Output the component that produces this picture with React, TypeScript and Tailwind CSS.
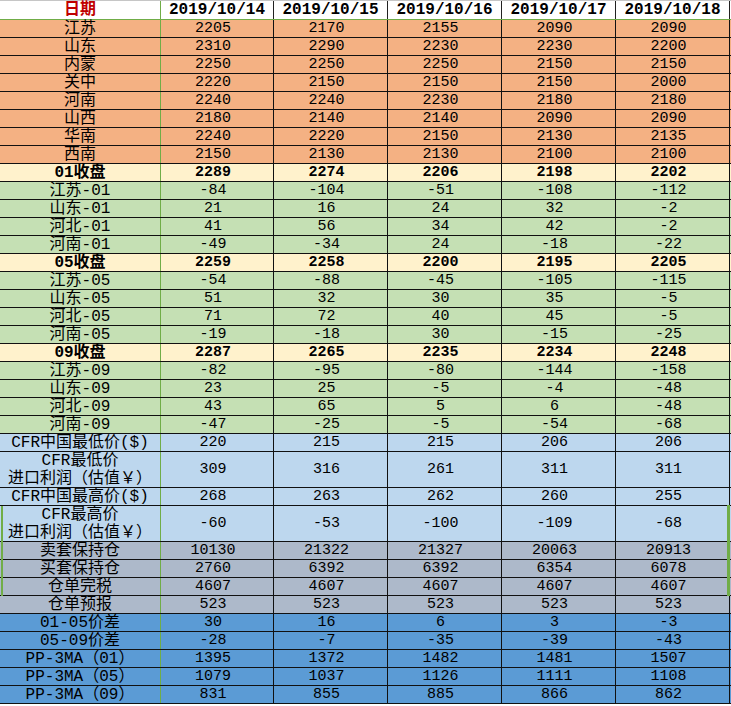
import React from "react";

type Row = {
  label: string | [string, string];
  vals: (number | string)[];
  bg: string;
  bold?: boolean;
  tall?: boolean;
};

const ORANGE = "bg-[#F4B183]";
const YELLOW = "bg-[#FFF2CC]";
const GREEN = "bg-[#C5E0B4]";
const LBLUE = "bg-[#BDD7EE]";
const GRAY = "bg-[#ADB9CA]";
const BLUE = "bg-[#5B9BD5]";

const rows: Row[] = [
  { label: "江苏", vals: [2205, 2170, 2155, 2090, 2090], bg: ORANGE },
  { label: "山东", vals: [2310, 2290, 2230, 2230, 2200], bg: ORANGE },
  { label: "内蒙", vals: [2250, 2250, 2250, 2150, 2150], bg: ORANGE },
  { label: "关中", vals: [2220, 2150, 2150, 2150, 2000], bg: ORANGE },
  { label: "河南", vals: [2240, 2240, 2230, 2180, 2180], bg: ORANGE },
  { label: "山西", vals: [2180, 2140, 2140, 2090, 2090], bg: ORANGE },
  { label: "华南", vals: [2240, 2220, 2150, 2130, 2135], bg: ORANGE },
  { label: "西南", vals: [2150, 2130, 2130, 2100, 2100], bg: ORANGE },
  { label: "01收盘", vals: [2289, 2274, 2206, 2198, 2202], bg: YELLOW, bold: true },
  { label: "江苏-01", vals: [-84, -104, -51, -108, -112], bg: GREEN },
  { label: "山东-01", vals: [21, 16, 24, 32, -2], bg: GREEN },
  { label: "河北-01", vals: [41, 56, 34, 42, -2], bg: GREEN },
  { label: "河南-01", vals: [-49, -34, 24, -18, -22], bg: GREEN },
  { label: "05收盘", vals: [2259, 2258, 2200, 2195, 2205], bg: YELLOW, bold: true },
  { label: "江苏-05", vals: [-54, -88, -45, -105, -115], bg: GREEN },
  { label: "山东-05", vals: [51, 32, 30, 35, -5], bg: GREEN },
  { label: "河北-05", vals: [71, 72, 40, 45, -5], bg: GREEN },
  { label: "河南-05", vals: [-19, -18, 30, -15, -25], bg: GREEN },
  { label: "09收盘", vals: [2287, 2265, 2235, 2234, 2248], bg: YELLOW, bold: true },
  { label: "江苏-09", vals: [-82, -95, -80, -144, -158], bg: GREEN },
  { label: "山东-09", vals: [23, 25, -5, -4, -48], bg: GREEN },
  { label: "河北-09", vals: [43, 65, 5, 6, -48], bg: GREEN },
  { label: "河南-09", vals: [-47, -25, -5, -54, -68], bg: GREEN },
  { label: "CFR中国最低价($)", vals: [220, 215, 215, 206, 206], bg: LBLUE },
  { label: ["CFR最低价", "进口利润（估值￥）"], vals: [309, 316, 261, 311, 311], bg: LBLUE, tall: true },
  { label: "CFR中国最高价($)", vals: [268, 263, 262, 260, 255], bg: LBLUE },
  { label: ["CFR最高价", "进口利润（估值￥）"], vals: [-60, -53, -100, -109, -68], bg: LBLUE, tall: true },
  { label: "卖套保持仓", vals: [10130, 21322, 21327, 20063, 20913], bg: GRAY },
  { label: "买套保持仓", vals: [2760, 6392, 6392, 6354, 6078], bg: GRAY },
  { label: "仓单完税", vals: [4607, 4607, 4607, 4607, 4607], bg: GRAY },
  { label: "仓单预报", vals: [523, 523, 523, 523, 523], bg: GRAY },
  { label: "01-05价差", vals: [30, 16, 6, 3, -3], bg: BLUE },
  { label: "05-09价差", vals: [-28, -7, -35, -39, -43], bg: BLUE },
  { label: "PP-3MA（01）", vals: [1395, 1372, 1482, 1481, 1507], bg: BLUE },
  { label: "PP-3MA（05）", vals: [1079, 1037, 1126, 1111, 1108], bg: BLUE },
  { label: "PP-3MA（09）", vals: [831, 855, 885, 866, 862], bg: BLUE },
];

const dates = ["2019/10/14", "2019/10/15", "2019/10/16", "2019/10/17", "2019/10/18"];
const widths = ["w-[113px]", "w-[114px]", "w-[114px]", "w-[114px]", "w-[114px]"];

const FONT = "font-['Liberation_Mono','Noto_Sans_CJK_SC',monospace]";

export default function App() {
  return (
    <div className={`relative w-[731px] h-[706px] bg-white text-black ${FONT}`}>
      {/* header */}
      <div className="flex h-[20px] border-t border-[#c6c6c6] border-b border-b-[#70AD47] bg-white">
        <div className="w-[161px] border-r border-[#70AD47] flex items-center justify-center text-[16px] font-bold text-[#C00000] leading-none">
          日期
        </div>
        {dates.map((d, i) => (
          <div
            key={d}
            className={`${widths[i]} border-r border-[#222] flex items-center justify-center text-[16px] font-bold leading-none`}
          >
            {d}
          </div>
        ))}
      </div>
      {rows.map((r, idx) => (
        <div
          key={idx}
          className={`flex ${r.tall ? "h-[36px]" : "h-[18px]"} ${r.bg} border-b border-[#111]`}
        >
          <div
            className={`w-[161px] border-r border-[#70AD47] flex flex-col items-center justify-center text-[16px] leading-[18px] whitespace-nowrap ${
              r.bold ? "font-bold" : ""
            }`}
          >
            {Array.isArray(r.label) ? (
              <>
                <span>{r.label[0]}</span>
                <span>{r.label[1]}</span>
              </>
            ) : (
              <span>{r.label}</span>
            )}
          </div>
          {r.vals.map((v, i) => (
            <div
              key={i}
              className={`${widths[i]} border-r border-[#111] flex items-center justify-center pr-[8px] text-[15px] leading-none ${
                r.bold ? "font-bold" : ""
              }`}
            >
              {v}
            </div>
          ))}
        </div>
      ))}
      {/* selection highlight edges */}
      <div className="absolute left-[1px] top-[506px] w-[2px] h-[90px] bg-[#70AD47]" />
      <div className="absolute left-[727px] top-[505px] w-[3px] h-[91px] bg-[#70AD47]" />
    </div>
  );
}
